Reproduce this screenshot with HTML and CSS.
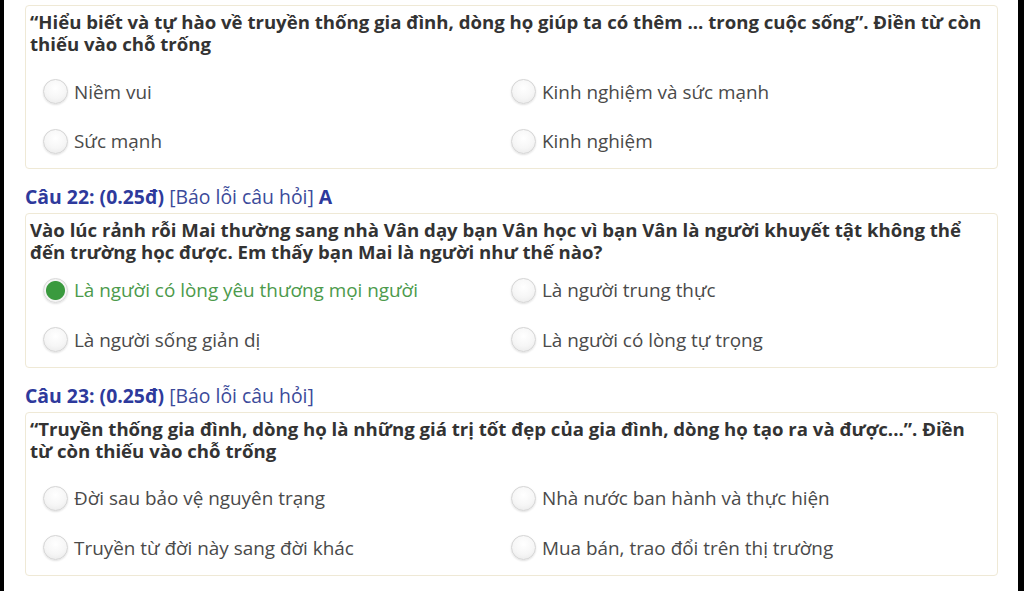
FILE: index.html
```html
<!DOCTYPE html>
<html lang="vi">
<head>
<meta charset="utf-8">
<link rel="stylesheet" href="styles.css">
</head>
<body>
<div class="screen">
  <main class="page">
    <section class="card">
      <p class="q-text spaced">“Hiểu biết và tự hào về truyền thống gia đình, dòng họ giúp ta có thêm ... trong cuộc sống”. Điền từ còn thiếu vào chỗ trống</p>
      <div class="options">
        <label class="opt"><span class="radio"></span>Niềm vui</label>
        <label class="opt"><span class="radio"></span>Kinh nghiệm và sức mạnh</label>
        <label class="opt"><span class="radio"></span>Sức mạnh</label>
        <label class="opt"><span class="radio"></span>Kinh nghiệm</label>
      </div>
    </section>

    <h3 class="q-head"><b>Câu 22: (0.25đ)</b> <span class="report">[Báo lỗi câu hỏi]</span> <b>A</b></h3>
    <section class="card">
      <p class="q-text">Vào lúc rảnh rỗi Mai thường sang nhà Vân dạy bạn Vân học vì bạn Vân là người khuyết tật không thể đến trường học được. Em thấy bạn Mai là người như thế nào?</p>
      <div class="options">
        <label class="opt selected"><span class="radio"></span>Là người có lòng yêu thương mọi người</label>
        <label class="opt"><span class="radio"></span>Là người trung thực</label>
        <label class="opt"><span class="radio"></span>Là người sống giản dị</label>
        <label class="opt"><span class="radio"></span>Là người có lòng tự trọng</label>
      </div>
    </section>

    <h3 class="q-head"><b>Câu 23: (0.25đ)</b> <span class="report">[Báo lỗi câu hỏi]</span></h3>
    <section class="card">
      <p class="q-text spaced">“Truyền thống gia đình, dòng họ là những giá trị tốt đẹp của gia đình, dòng họ tạo ra và được...”. Điền từ còn thiếu vào chỗ trống</p>
      <div class="options">
        <label class="opt"><span class="radio"></span>Đời sau bảo vệ nguyên trạng</label>
        <label class="opt"><span class="radio"></span>Nhà nước ban hành và thực hiện</label>
        <label class="opt"><span class="radio"></span>Truyền từ đời này sang đời khác</label>
        <label class="opt"><span class="radio"></span>Mua bán, trao đổi trên thị trường</label>
      </div>
    </section>
  </main>
</div>
</body>
</html>
```

FILE: styles.css
```css
* { box-sizing: border-box; }
html, body {
  margin: 0;
  padding: 0;
  background: #000;
  height: 100%;
  overflow: hidden;
}
.screen {
  display: flex;
  height: 591px;
  padding: 0 6px 0 4px;
}
.page {
  flex: 1;
  background: #fff;
  padding: 5px 20px 0 21px;
  font-family: "Open Sans", "Noto Sans", sans-serif;
  color: #444;
}
.card {
  border: 1px solid #efe9d6;
  border-radius: 4px;
  padding: 5px 12px 2px 4px;
}
.q-text {
  margin: 0;
  font-size: 18.6px;
  line-height: 22px;
  font-weight: 700;
  color: #333;
}
.q-text.spaced { margin-bottom: 12px; }
.options {
  display: grid;
  grid-template-columns: 468px 468px;
  grid-auto-rows: 49.5px;
  padding-left: 13px;
  margin-top: 2.5px;
}
.opt {
  display: flex;
  align-items: center;
  gap: 6px;
  font-size: 18.9px;
  color: #4a4a4a;
  white-space: nowrap;
}
.radio {
  width: 25px;
  height: 25px;
  border-radius: 50%;
  border: 1px solid #d4d4d4;
  background: radial-gradient(circle at 50% 35%, #fff 0%, #f6f6f6 55%, #e6e6e6 100%);
  box-shadow: 0 1px 2px rgba(0,0,0,0.12);
  flex: none;
}
.opt.selected { color: #4c9a4c; }
.opt.selected .radio {
  background: radial-gradient(circle, #3a9a3e 0, #3a9a3e 9px, #f4f4f4 10px);
  border-color: #d8d8d8;
}
.q-head {
  margin: 17px 0 5px 0;
  font-size: 19.4px;
  line-height: 22px;
  font-weight: 400;
  color: #2e3a9c;
}
.q-head b { font-weight: 700; }
.report { color: #3b4a9a; }
```
